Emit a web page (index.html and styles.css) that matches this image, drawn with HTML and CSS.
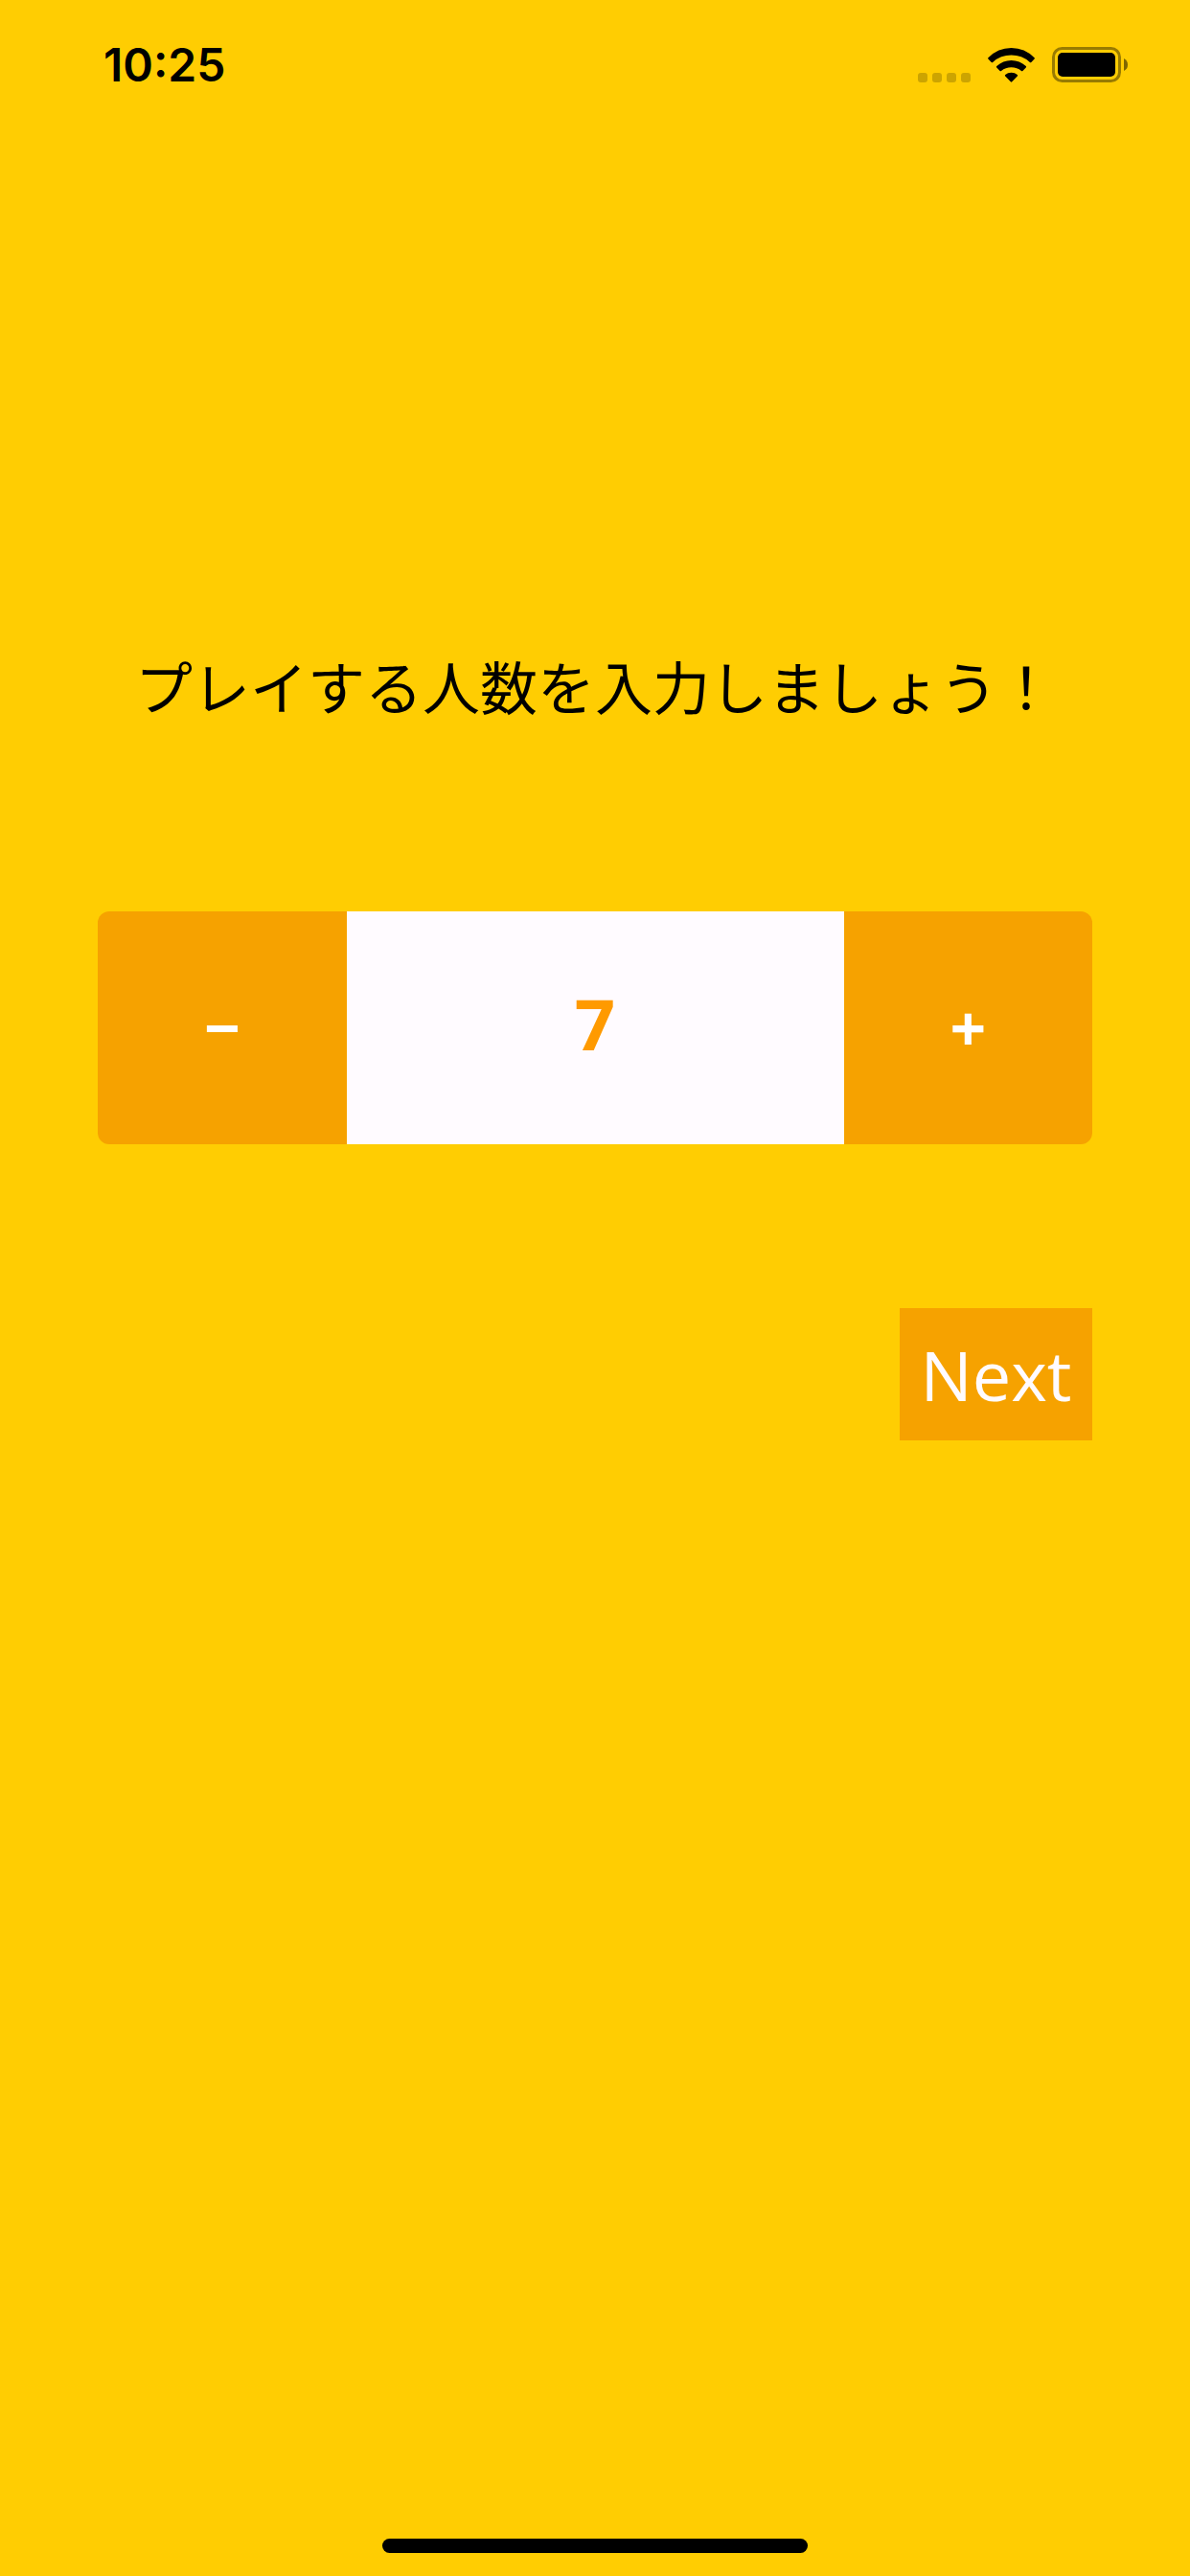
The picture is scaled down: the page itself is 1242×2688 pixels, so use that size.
FILE: index.html
```html
<!DOCTYPE html>
<html lang="ja">
<head>
<meta charset="utf-8">
<meta name="viewport" content="width=device-width, initial-scale=1">
<title>プレイ人数</title>
<link rel="stylesheet" href="styles.css">
</head>
<body>
<div class="screen">
  <header class="status">
    <time class="clock">10:25</time>
    <div class="indicators">
      <svg class="signal" viewBox="0 0 55 10" aria-hidden="true">
        <rect width="10" height="10" rx="3"/><rect x="15" width="10" height="10" rx="3"/><rect x="30" width="10" height="10" rx="3"/><rect x="45" width="10" height="10" rx="3"/>
      </svg>
      <svg class="wifi" viewBox="0 0 49 36" aria-hidden="true">
        <path d="M.4 10.2Q10.5 0 24.5 0T48.600 10.200Q49.200 10.900 48.600 11.600L45.300 14.900Q44.600 15.600 43.900 14.900Q35.600 7.600 24.500 7.600T5.100 14.900Q4.400 15.600 3.700 14.900L.4 11.600Q-.2 10.900 .4 10.200Z"/>
        <path d="M9.200 19.100Q15.800 13 24.500 13T39.800 19.100Q40.500 19.800 39.800 20.500L36.400 23.900Q35.700 24.500 35 23.900Q30.500 20.200 24.500 20.200T14 23.900Q13.300 24.500 12.600 23.900L9.200 20.500Q8.500 19.800 9.200 19.100Z"/>
        <path d="M18.200 28Q20.800 25.700 24.500 25.700T30.800 28Q31.600 28.800 30.800 29.600L25.200 35.300Q24.500 36 23.800 35.300L18.200 29.600Q17.400 28.800 18.200 28Z"/>
      </svg>
      <svg class="battery" viewBox="0 0 80 37" aria-hidden="true">
        <rect class="shell" x="1.500" y="1.500" width="69" height="34" rx="9"/>
        <rect x="6" y="6" width="60" height="25" rx="5"/>
        <path class="cap" d="M75 12Q79 14 79 18.500T75 25Z"/>
      </svg>
    </div>
  </header>
  <main class="setup">
    <h1 class="title"><label for="players">プレイする人数を入力しましょう！</label></h1>
    <div class="stepper">
      <button class="step" type="button" aria-label="減らす">−</button>
      <input class="count" id="players" type="text" inputmode="numeric" value="7">
      <button class="step" type="button" aria-label="増やす">+</button>
    </div>
    <button class="next" type="button">Next</button>
  </main>
  <div class="home"></div>
</div>
</body>
</html>
```
FILE: styles.css
```css
* { box-sizing: border-box; }
body { margin: 0; background: #ffcd02; color: #000; }
button, input { border: 0; margin: 0; padding: 0; border-radius: 0; }
.screen { min-height: 100vh; display: flex; flex-direction: column; padding-bottom: 24px; }
.status { display: flex; justify-content: space-between; align-items: center; padding: 36px 64px 0 108px; height: 100px; }
.clock { font: 600 48px/64px Inter, sans-serif; }
.indicators { display: flex; align-items: flex-end; gap: 18px; padding-bottom: 2px; }
.signal { width: 55px; height: 10px; fill: rgba(0, 0, 0, .2); }
.wifi { width: 49px; height: 36px; }
.battery { width: 80px; height: 37px; }
.shell { fill: none; stroke: rgba(0, 0, 0, .4); stroke-width: 3; }
.cap { fill: rgba(0, 0, 0, .5); }
.setup { flex: 1; display: flex; flex-direction: column; padding: 570px 102px 0; }
.title { margin: 0; font: 400 60px/90px "Noto Sans CJK JP", sans-serif; text-align: center; }
.stepper { display: flex; height: 243px; margin-top: 191px; border-radius: 12px; overflow: hidden; }
.step { flex: 1; padding-bottom: 4px; background: #f6a200; color: #fff; font: 700 66px/80px "Open Sans", sans-serif; }
.count { flex: 2; min-width: 0; padding-bottom: 10px; background: #fffbff; color: #ff9a00; font: 700 74px/100px "Open Sans", sans-serif; text-align: center; }
.next { align-self: flex-end; width: 201px; height: 138px; margin-top: 171px; background: #f6a200; color: #fffbff; font: 400 72px/100px "Open Sans", sans-serif; }
.home { align-self: center; width: 444px; max-width: 60%; height: 15px; border-radius: 8px; background: #000; }
```
